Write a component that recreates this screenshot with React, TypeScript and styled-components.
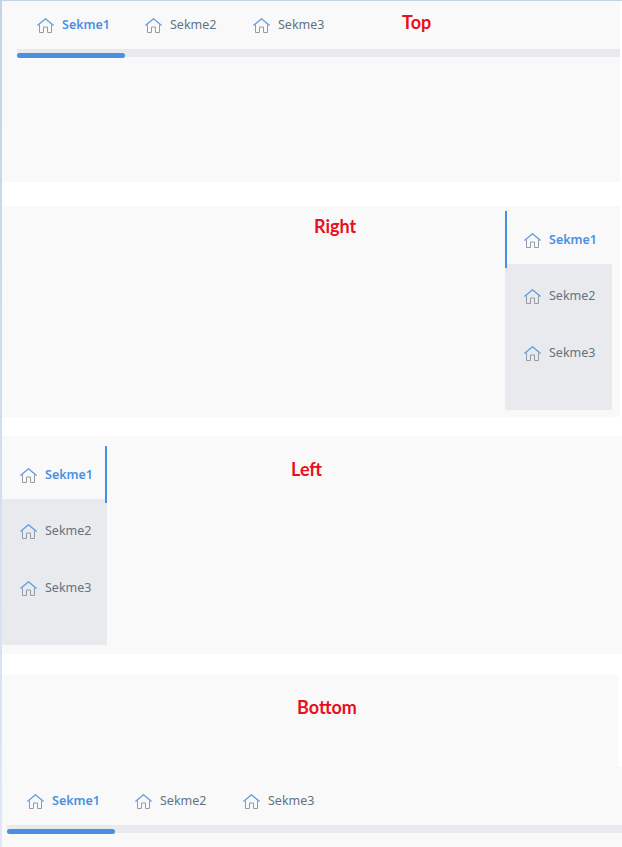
import React from "react";
import styled, { createGlobalStyle } from "styled-components";

const GlobalStyle = createGlobalStyle`
  html, body {
    margin: 0;
    padding: 0;
    background: #fff;
  }
`;

const Page = styled.div`
  width: 622px;
  height: 847px;
  overflow: hidden;
  box-sizing: border-box;
  padding: 1px 0 0 2px;
  font-family: "Noto Sans", sans-serif;
  font-size: 12.5px;
  background:
    linear-gradient(#c6d2e8, #dfe8f6) left top / 2px 100% no-repeat,
    linear-gradient(#c6d2e8, #c6d2e8) left top / 100% 1px no-repeat,
    #fff;
`;

const Panel = styled.section<{ $height: number; $gap?: number; $inset?: number }>`
  display: flex;
  box-sizing: border-box;
  height: ${(p) => p.$height}px;
  margin-bottom: ${(p) => p.$gap ?? 0}px;
  margin-right: ${(p) => p.$inset ?? 0}px;
  background: #f9f9fa;
`;

const TopPanel = styled(Panel)`
  flex-direction: column;
  padding-left: 15px;
`;

const BottomStrip = styled(Panel)`
  flex-direction: column;
  padding: 10px 0 0 5px;
`;

const SidePanel = styled(Panel)<{ $top: number }>`
  padding-top: ${(p) => p.$top}px;
`;

const Caption = styled.div<{ $left: number; $top: number }>`
  margin: ${(p) => p.$top}px 0 0 ${(p) => p.$left}px;
  font-family: "Lato", sans-serif;
  font-size: 18px;
  line-height: 20px;
  font-weight: 700;
  color: #e8101c;
`;

const Content = styled.div`
  flex: 1;
`;

const TabRow = styled.div<{ $height: number }>`
  display: flex;
  height: ${(p) => p.$height}px;
`;

const HTab = styled.div<{ $active?: boolean }>`
  display: flex;
  align-items: center;
  gap: 8px;
  width: 108px;
  box-sizing: border-box;
  padding: 0 0 2px 20px;
  color: ${(p) => (p.$active ? "#4a90e2" : "#66727f")};
  font-weight: ${(p) => (p.$active ? 600 : 400)};
`;

const Track = styled.div`
  position: relative;
  height: 8px;
  background: #e8eaee;
`;

const Indicator = styled.div`
  position: absolute;
  left: 0;
  top: 4px;
  width: 108px;
  height: 5px;
  border-radius: 3px;
  background: #4a90e2;
`;

const SideNav = styled.div<{ $height: number; $end?: boolean }>`
  display: flex;
  flex-direction: column;
  width: ${(p) => (p.$end ? 107 : 105)}px;
  height: ${(p) => p.$height}px;
  background: #e8eaee;
  margin-right: ${(p) => (p.$end ? 8 : 0)}px;
`;

const VTab = styled.div<{ $active?: boolean; $end?: boolean; $pad: number }>`
  position: relative;
  display: flex;
  align-items: center;
  gap: 8px;
  box-sizing: border-box;
  height: ${(p) => (p.$active ? 53 : 57)}px;
  margin-bottom: ${(p) => (p.$active ? 4 : 0)}px;
  padding: ${(p) => (p.$active ? "4px" : "0")} 0 ${(p) => (p.$active ? "0" : "3px")} ${(p) => p.$pad}px;
  color: ${(p) => (p.$active ? "#4a90e2" : "#66727f")};
  font-weight: ${(p) => (p.$active ? 600 : 400)};
  background: ${(p) => (p.$active ? "#f9f9fa" : "transparent")};

  ${(p) =>
    p.$active &&
    `&::after {
      content: "";
      position: absolute;
      top: 0;
      ${p.$end ? "left" : "right"}: 0;
      width: 2px;
      height: 57px;
      background: #4a90e2;
    }`}
`;

const IconBox = styled.svg`
  flex-shrink: 0;
  margin-top: 2px;
`;

const HomeIcon = () => (
  <IconBox width="17" height="15" viewBox="0 0 17 15" fill="none">
    <path d="M2.5 6.5V14.5H6.5V9H10.5V14.5H14.5V6.5" stroke="#969ba3" strokeWidth="1" />
    <path d="M0.4 7.6L8.5 0.8L16.6 7.6" stroke="#5b9ce6" strokeWidth="1.3" />
  </IconBox>
);

const labels = ["Sekme1", "Sekme2", "Sekme3"];

const HorizontalTabs = () => (
  <>
    {labels.map((label, i) => (
      <HTab key={label} $active={i === 0}>
        <HomeIcon />
        {label}
      </HTab>
    ))}
  </>
);

const VerticalTabs = ({ end, height, pad }: { end?: boolean; height: number; pad: number }) => (
  <SideNav $end={end} $height={height}>
    {labels.map((label, i) => (
      <VTab key={label} $active={i === 0} $end={end} $pad={pad}>
        <HomeIcon />
        {label}
      </VTab>
    ))}
  </SideNav>
);

export default function App() {
  return (
    <Page>
      <GlobalStyle />
      <TopPanel $height={181} $gap={24} $inset={2}>
        <TabRow $height={48}>
          <HorizontalTabs />
          <Caption $left={61} $top={11}>Top</Caption>
        </TabRow>
        <Track>
          <Indicator />
        </Track>
      </TopPanel>

      <SidePanel $height={211} $gap={19} $inset={2} $top={5}>
        <Content>
          <Caption $left={312} $top={5}>Right</Caption>
        </Content>
        <VerticalTabs end height={199} pad={19} />
      </SidePanel>

      <SidePanel $height={218} $gap={21} $top={10}>
        <VerticalTabs height={199} pad={18} />
        <Content>
          <Caption $left={184} $top={13}>Left</Caption>
        </Content>
      </SidePanel>

      <Panel $height={92} $inset={4}>
        <Caption $left={295} $top={22}>Bottom</Caption>
      </Panel>

      <BottomStrip $height={80}>
        <TabRow $height={48}>
          <HorizontalTabs />
        </TabRow>
        <Track>
          <Indicator />
        </Track>
      </BottomStrip>
    </Page>
  );
}
